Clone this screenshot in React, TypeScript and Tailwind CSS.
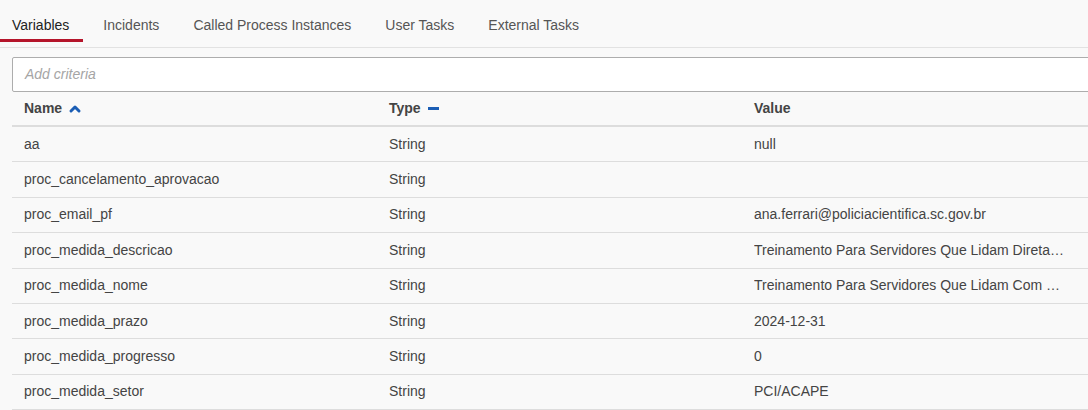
import { ChevronUp } from 'lucide-react';

const TABS = ['Variables', 'Incidents', 'Called Process Instances', 'User Tasks', 'External Tasks'];

const ROWS: [string, string, string][] = [
  ['aa', 'String', 'null'],
  ['proc_cancelamento_aprovacao', 'String', ''],
  ['proc_email_pf', 'String', 'ana.ferrari@policiacientifica.sc.gov.br'],
  ['proc_medida_descricao', 'String', 'Treinamento Para Servidores Que Lidam Diretamente Com o Público'],
  ['proc_medida_nome', 'String', 'Treinamento Para Servidores Que Lidam Com Conflitos'],
  ['proc_medida_prazo', 'String', '2024-12-31'],
  ['proc_medida_progresso', 'String', '0'],
  ['proc_medida_setor', 'String', 'PCI/ACAPE'],
];

export default function App() {
  return (
    <div className="w-[1088px] h-[410px] overflow-hidden bg-[#f9f9f9] text-[14px] text-[#333] font-['Liberation_Sans',Arial,sans-serif]">
      {/* Tabs */}
      <div className="flex h-[48px] border-b border-[#e2e2e2]">
        {TABS.map((tab, i) => (
          <div
            key={tab}
            className={`flex items-center h-[42px] pt-[12px] pl-3 pr-[14px] mr-[8px] border-b-[3px] ${
              i === 0 ? 'border-[#b5152b] text-[#222]' : 'border-transparent text-[#555]'
            }`}
          >
            {tab}
          </div>
        ))}
      </div>

      <div className="pl-3 pt-[9px]">
        {/* Search */}
        <div className="h-[35px] w-[1090px] bg-white border border-[#adadad] rounded-[2px] flex items-center px-3">
          <span className="italic text-[#a5a5a5]">Add criteria</span>
        </div>

        {/* Table */}
        <div className="w-[1095px]">
          <div className="flex h-[35px] border-b-2 border-[#ddd] font-bold text-[#444]">
            <div className="w-[365px] px-3 flex items-center gap-[5px]">
              Name <ChevronUp className="w-[16px] h-[16px] text-[#1b5eb5]" strokeWidth={4.5} />
            </div>
            <div className="w-[365px] px-3 flex items-center gap-[7px]">
              Type <span className="inline-block w-[11px] h-[3px] bg-[#1b5eb5]" />
            </div>
            <div className="w-[365px] px-3 flex items-center">Value</div>
          </div>
          {ROWS.map(([name, type, value]) => (
            <div key={name} className="flex h-[35.4px] border-b border-[#ddd] text-[#444]">
              <div className="w-[365px] px-3 flex items-center">{name}</div>
              <div className="w-[365px] px-3 flex items-center">{type}</div>
              <div className="w-[365px] px-3 flex items-center">
                <span className="w-[310px] truncate">{value}</span>
              </div>
            </div>
          ))}
        </div>
      </div>
    </div>
  );
}
